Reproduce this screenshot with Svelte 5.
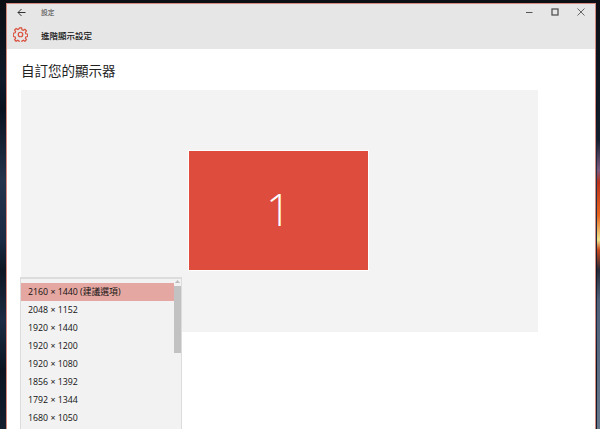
<script>
  const modes = [
    '2160 × 1440 (建議選項)',
    '2048 × 1152',
    '1920 × 1440',
    '1920 × 1200',
    '1920 × 1080',
    '1856 × 1392',
    '1792 × 1344',
    '1680 × 1050',
  ];
</script>

<div class="desktop">
  <div class="window">
    <div class="titlebar">
      <svg class="back" width="9" height="9" viewBox="0 0 9 9" fill="none" stroke="#333" stroke-width="1">
        <path d="M8.500 4.500H1M4.500 1L1 4.500 4.500 8" />
      </svg>
      <span class="app-name">設定</span>
      <div class="controls">
        <svg width="10" height="10" viewBox="0 0 10 10" stroke="#555" fill="none"><path d="M2 5.500h6.500" /></svg>
        <svg width="10" height="10" viewBox="0 0 10 10" stroke="#555" stroke-width="1.300" fill="none"><rect x="2" y="2" width="6" height="6" /></svg>
        <svg width="10" height="10" viewBox="0 0 10 10" stroke="#666" fill="none"><path d="M1.500 1.500l7 7M8.500 1.500l-7 7" /></svg>
      </div>
    </div>
    <div class="pagebar">
      <svg class="gear" width="15" height="15" viewBox="0 0 16 16" fill="none" stroke="#d9503c" stroke-width="1.300">
        <circle cx="8" cy="8" r="2.400" />
        <path d="M6.800 1h2.400l.4 2 1.300.6 1.800-1.100 1.600 1.700-1.100 1.700.5 1.300 2 .5v2.400l-2 .5-.5 1.300 1.100 1.700-1.600 1.700-1.800-1.100-1.300.6-.4 2H6.800l-.4-2-1.300-.6-1.800 1.100-1.600-1.700 1.100-1.700-.5-1.300-2-.5V6.700l2-.5.5-1.300-1.100-1.700 1.600-1.700 1.800 1.100 1.300-.6z" />
      </svg>
      <span class="page-title">進階顯示設定</span>
    </div>
    <main class="content">
      <h1>自訂您的顯示器</h1>
      <div class="stage">
        <div class="monitor">1</div>
      </div>
      <div class="dropdown">
        <ul>
          {#each modes as mode, i}
            <li class:selected={i === 0}>{mode}</li>
          {/each}
        </ul>
        <div class="scrollbar">
          <svg class="arrow" width="7" height="5" viewBox="0 0 7 5" fill="#bbb"><path d="M3.500 1L6 4H1z" /></svg>
          <div class="thumb"></div>
        </div>
      </div>
    </main>
  </div>
</div>

<style>
  :global(body) {
    margin: 0;
    background: #1a2430;
  }
  .desktop {
    height: 429px;
    overflow: hidden;
    padding: 3px 4px 0 6px;
    box-sizing: border-box;
    background:
      linear-gradient(180deg, #0c0f14 0, #141e2c 140px, #7a5a80 170px, #b8321c 182px, #e8641c 215px, #f0e48c 240px, #c8481c 250px, #262a38 270px, #4f6078 300px, #66788e 429px) right top / 3px 100% no-repeat,
      linear-gradient(180deg, #0c0f14 0, #101a28 80px, #0a1220 110px, #24344c 180px, #1a2a42 240px, #0e1622 270px, #1c2c44 320px, #0c1420 370px, #141e2e 429px);
    font-family: "Noto Sans CJK TC", "Liberation Sans", sans-serif;
  }
  .window {
    height: 426px;
    display: flex;
    flex-direction: column;
    border: 1px solid #d58a80;
    border-bottom: 0;
    box-sizing: border-box;
    background: #fff;
  }
  .titlebar {
    height: 16px;
    flex: none;
    display: flex;
    align-items: center;
    background: #e6e6e6;
    color: #444;
    font-size: 6.800px;
  }
  .back {
    margin-left: 10px;
  }
  .app-name {
    margin-left: 15px;
  }
  .controls {
    margin-left: auto;
    display: flex;
    gap: 16px;
    margin-right: 9px;
  }
  .pagebar {
    height: 29px;
    flex: none;
    display: flex;
    align-items: center;
    background: #e6e6e6;
    color: #111;
    font-size: 8.500px;
    font-weight: 500;
  }
  .gear {
    margin-left: 6px;
  }
  .page-title {
    margin-left: 13px;
  }
  .content {
    position: relative;
    flex: 1;
    padding: 11px 0 0 14px;
    overflow: hidden;
  }
  h1 {
    margin: 0 0 10px;
    font-size: 13.500px;
    line-height: 20px;
    font-weight: 400;
    color: #222;
  }
  .stage {
    width: 517px;
    height: 242px;
    box-sizing: border-box;
    padding: 0 2px 1px 0;
    display: flex;
    align-items: center;
    justify-content: center;
    background: #f3f3f3;
  }
  .monitor {
    width: 179px;
    height: 119px;
    padding-bottom: 3px;
    box-sizing: border-box;
    display: flex;
    align-items: center;
    justify-content: center;
    background: #dd4c3c;
    outline: 1px solid #fff;
    color: #fff;
    font-family: "Open Sans", "Liberation Sans", sans-serif;
    font-weight: 300;
    font-size: 44px;
  }
  .dropdown {
    position: absolute;
    left: 13px;
    top: 228px;
    width: 162px;
    height: 160px;
    display: flex;
    box-sizing: border-box;
    border: 1px solid #dcdcdc;
    border-top-width: 2px;
    border-bottom: 0;
    background: #f2f2f2;
  }
  ul {
    list-style: none;
    margin: 0;
    padding: 4px 0 0;
    flex: 1;
    font-family: "Open Sans", "Noto Sans CJK TC", sans-serif;
    font-size: 8.800px;
    color: #111;
  }
  li {
    height: 18px;
    line-height: 18px;
    padding-left: 7px;
  }
  li.selected {
    background: #e5a7a1;
  }
  .scrollbar {
    width: 7px;
    flex: none;
    display: flex;
    flex-direction: column;
  }
  .arrow {
    display: block;
    flex: none;
    margin-bottom: 2px;
  }
  .thumb {
    height: 67px;
    background: #c2c2c2;
  }
</style>
